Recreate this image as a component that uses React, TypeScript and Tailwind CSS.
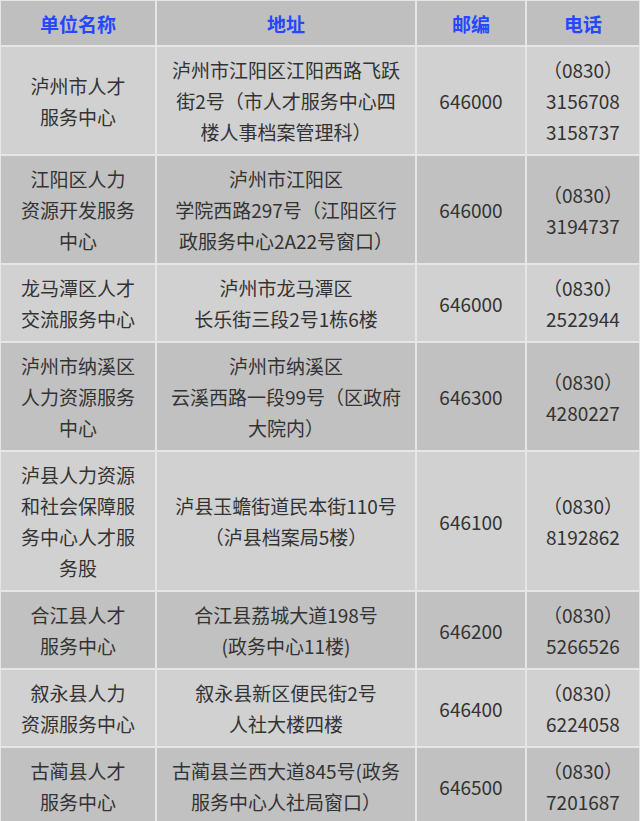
const rows: { name: string[]; addr: string[]; zip: string; tel: string[] }[] = [
  {
    name: ['泸州市人才', '服务中心'],
    addr: ['泸州市江阳区江阳西路飞跃', '街2号（市人才服务中心四', '楼人事档案管理科）'],
    zip: '646000',
    tel: ['（0830）', '3156708', '3158737'],
  },
  {
    name: ['江阳区人力', '资源开发服务', '中心'],
    addr: ['泸州市江阳区', '学院西路297号（江阳区行', '政服务中心2A22号窗口）'],
    zip: '646000',
    tel: ['（0830）', '3194737'],
  },
  {
    name: ['龙马潭区人才', '交流服务中心'],
    addr: ['泸州市龙马潭区', '长乐街三段2号1栋6楼'],
    zip: '646000',
    tel: ['（0830）', '2522944'],
  },
  {
    name: ['泸州市纳溪区', '人力资源服务', '中心'],
    addr: ['泸州市纳溪区', '云溪西路一段99号（区政府', '大院内）'],
    zip: '646300',
    tel: ['（0830）', '4280227'],
  },
  {
    name: ['泸县人力资源', '和社会保障服', '务中心人才服', '务股'],
    addr: ['泸县玉蟾街道民本街110号', '（泸县档案局5楼）'],
    zip: '646100',
    tel: ['（0830）', '8192862'],
  },
  {
    name: ['合江县人才', '服务中心'],
    addr: ['合江县荔城大道198号', '(政务中心11楼)'],
    zip: '646200',
    tel: ['（0830）', '5266526'],
  },
  {
    name: ['叙永县人力', '资源服务中心'],
    addr: ['叙永县新区便民街2号', '人社大楼四楼'],
    zip: '646400',
    tel: ['（0830）', '6224058'],
  },
  {
    name: ['古蔺县人才', '服务中心'],
    addr: ['古蔺县兰西大道845号(政务', '服务中心人社局窗口）'],
    zip: '646500',
    tel: ['（0830）', '7201687'],
  },
];

const headers = ['单位名称', '地址', '邮编', '电话'];

function Lines({ lines }: { lines: string[] }) {
  return (
    <>
      {lines.map((l, i) => (
        <div key={i} className="whitespace-nowrap">{l}</div>
      ))}
    </>
  );
}

export default function App() {
  return (
    <div
      className="w-[640px] h-[821px] overflow-hidden bg-[#e6e6e6]"
      style={{ fontFamily: '"Noto Sans CJK SC", "Noto Sans", sans-serif' }}
    >
      <div className="grid grid-cols-[154px_258px_108px_1fr] gap-[2px] p-px text-[19px] leading-[31px] text-[#333]">
        {headers.map(h => (
          <div key={h} className="h-[44px] flex items-center justify-center bg-[#bfbfbf] font-bold text-[#2447ff]">
            {h}
          </div>
        ))}
        {rows.map((r, i) => {
          const bg = i % 2 === 0 ? 'bg-[#d1d1d1]' : 'bg-[#c1c1c1]';
          const cell = `flex flex-col items-center justify-center text-center py-[7px] ${bg}`;
          return [
            <div key={`n${i}`} className={cell}><Lines lines={r.name} /></div>,
            <div key={`a${i}`} className={cell}><Lines lines={r.addr} /></div>,
            <div key={`z${i}`} className={cell}>{r.zip}</div>,
            <div key={`t${i}`} className={cell}><Lines lines={r.tel} /></div>,
          ];
        })}
      </div>
    </div>
  );
}
